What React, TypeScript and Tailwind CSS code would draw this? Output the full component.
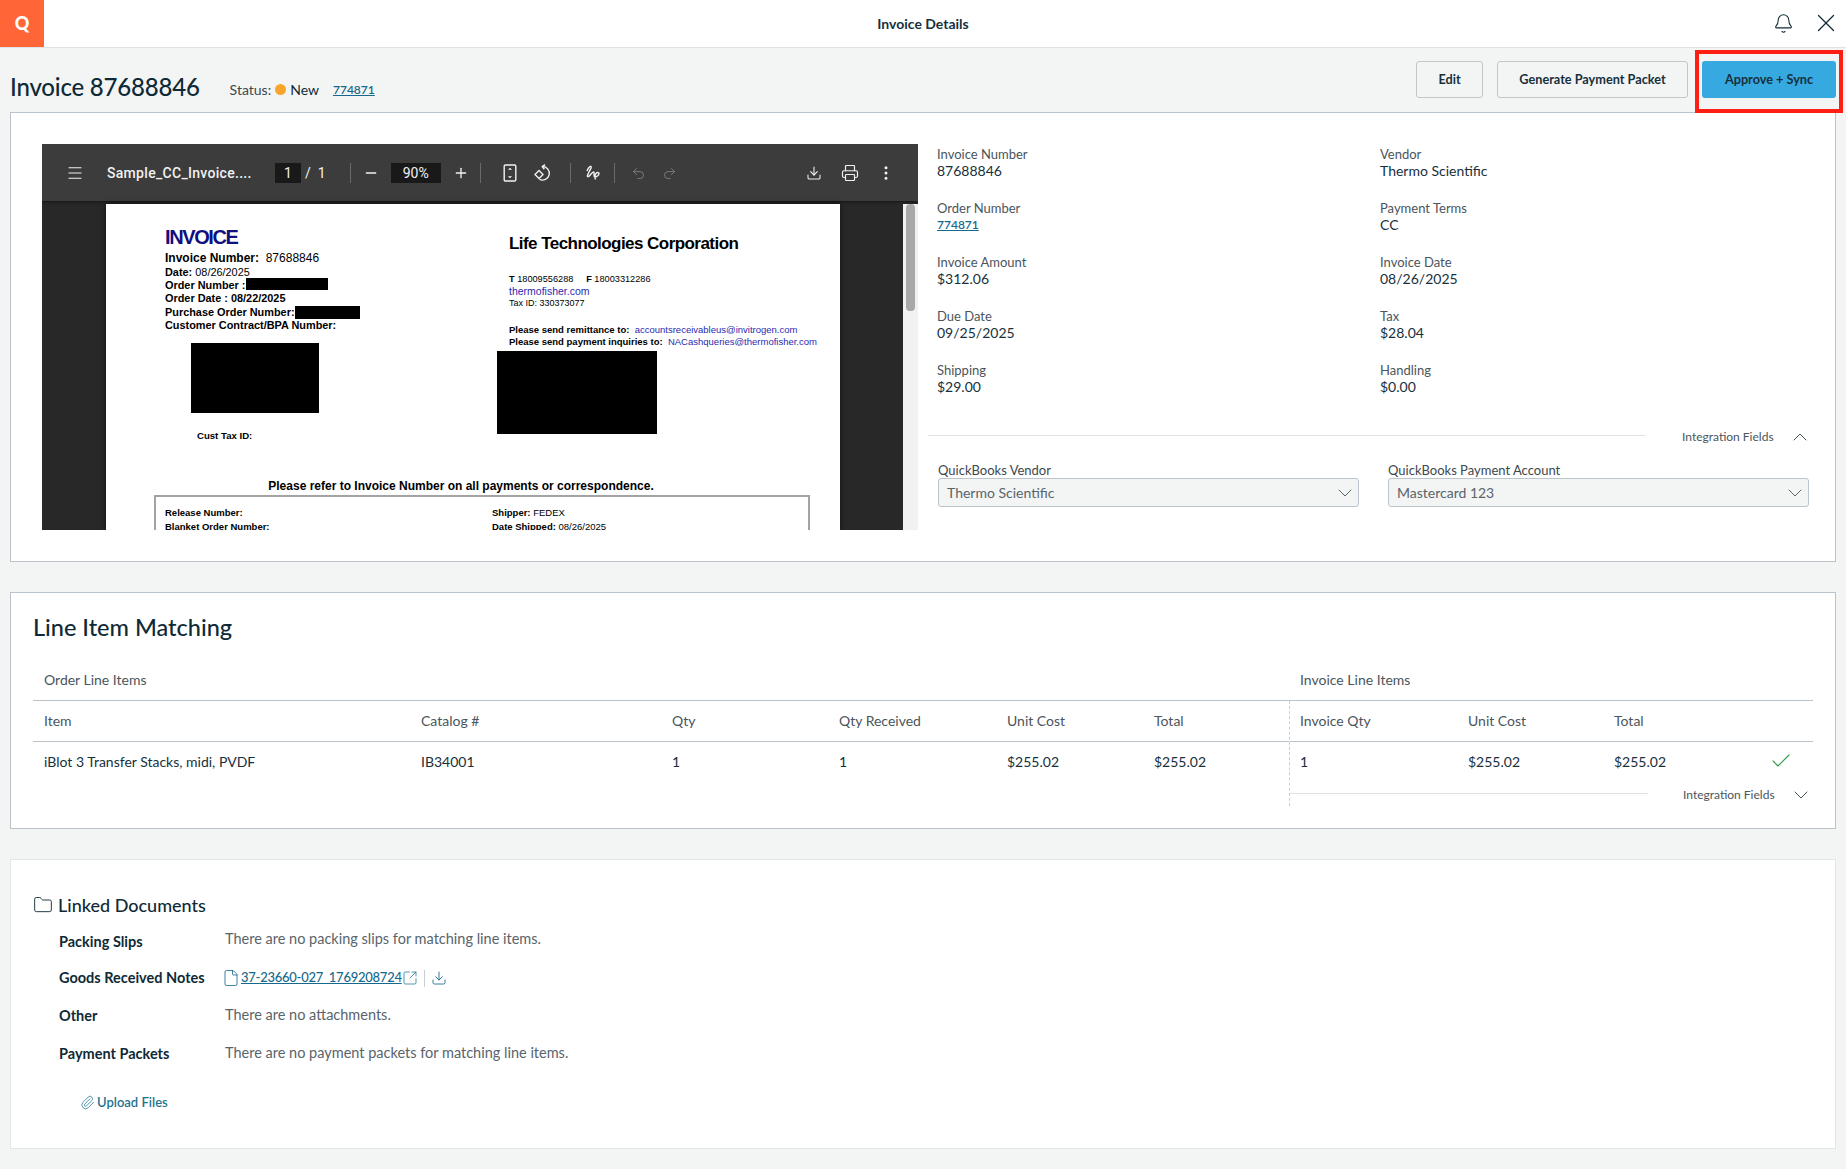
import React from 'react'
import { Bell, X, Menu, Minus, Plus, Download, Printer, EllipsisVertical, Undo2, Redo2, ChevronUp, ChevronDown, Check, Folder, File, SquareArrowOutUpRight, Paperclip } from 'lucide-react'

const fields = [
  ['Invoice Number', '87688846', 'Vendor', 'Thermo Scientific'],
  ['Order Number', '774871', 'Payment Terms', 'CC'],
  ['Invoice Amount', '$312.06', 'Invoice Date', '08/26/2025'],
  ['Due Date', '09/25/2025', 'Tax', '$28.04'],
  ['Shipping', '$29.00', 'Handling', '$0.00'],
]

const Field = ({ label, value }: { label: string; value: string }) => (
  <div className="h-[54px]">
    <div className="text-[13px] leading-[16px] text-[#4a555c]">{label}</div>
    {value === '774871' ? (
      <a className="block text-[12px] leading-[17px] font-semibold text-[#16698c] underline">{value}</a>
    ) : (
      <div className="text-[14px] leading-[18px] text-[#17303c]">{value}</div>
    )}
  </div>
)

const Select = ({ label, value }: { label: string; value: string }) => (
  <div className="w-[421px]">
    <div className="text-[13px] leading-[16px] text-[#3c474e]">{label}</div>
    <div className="flex h-[29px] items-center justify-between rounded-[3px] border border-[#bcc5cb] bg-[#f3f5f5] pl-[8px] pr-[1px] text-[14px] text-[#59646b]">
      {value}
      <ChevronDown className="h-[24px] w-[24px] text-[#59646b]" strokeWidth={1} />
    </div>
  </div>
)

const ToolDivider = () => <div className="h-[20px] w-px bg-[#6a6a6a]" />

const Redact = ({ className }: { className: string }) => <span className={`inline-block bg-black ${className}`} />

const PdfPage = () => (
  <div className="h-[326px] w-[734px] overflow-hidden bg-white font-['Liberation_Sans',Arial,sans-serif] text-black shadow-[0_0_6px_rgba(0,0,0,0.6)]">
    <div className="flex">
      <div className="w-[391px] pl-[59px] pt-[22px]">
        <div className="text-[20px] leading-[22px] font-bold tracking-[-1.4px] text-[#10107f]">INVOICE</div>
        <div className="mt-[3px] text-[12px] leading-[15px]"><b>Invoice Number:</b>&nbsp; 87688846</div>
        <div className="text-[10.9px] leading-[13.2px] font-bold">
          <div>Date: <span className="font-normal">08/26/2025</span></div>
          <div className="flex items-start">Order Number :<Redact className="ml-[1px] h-[12px] w-[82px] -translate-y-[1px]" /></div>
          <div>Order Date : 08/22/2025</div>
          <div className="flex items-start">Purchase Order Number:<Redact className="h-[13px] w-[65px]" /></div>
          <div>Customer Contract/BPA Number:</div>
        </div>
        <div className="ml-[26px] mt-[11px] h-[70px] w-[128px] bg-black" />
        <div className="ml-[32px] mt-[17px] text-[9.6px] leading-[11px] font-bold">Cust Tax ID:</div>
      </div>
      <div className="w-[343px] pl-[12px] pt-[31px]">
        <div className="text-[17px] leading-[18px] font-bold tracking-[-0.55px]">Life Technologies Corporation</div>
        <div className="mt-[20px] text-[9.2px] leading-[12px]"><b>T</b> 18009556288 &nbsp;&nbsp;&nbsp; <b>F</b> 18003312286</div>
        <div className="text-[10.5px] leading-[12px] text-[#2a2ab0]">thermofisher.com</div>
        <div className="text-[9px] leading-[12px]">Tax ID: 330373077</div>
        <div className="mt-[15px] whitespace-nowrap text-[9.5px] leading-[12px]"><b>Please send remittance to:</b>&nbsp; <span className="text-[#2a2ab0]">accountsreceivableus@invitrogen.com</span></div>
        <div className="whitespace-nowrap text-[9.5px] leading-[12px]"><b>Please send payment inquiries to:</b>&nbsp; <span className="text-[#2a2ab0]">NACashqueries@thermofisher.com</span></div>
        <div className="-ml-[12px] mt-[3px] h-[83px] w-[160px] bg-black" />
      </div>
    </div>
    <div className="mr-[24px] mt-[38px] text-center text-[12px] leading-[14px] font-bold">Please refer to Invoice Number on all payments or correspondence.</div>
    <div className="ml-[48px] mt-[2px] w-[656px] border-2 border-b-0 border-[#a3a3a3] px-[9px] pt-[9px] text-[9.5px] leading-[14px] font-bold">
      <div className="flex"><div className="w-[327px]">Release Number:</div><div>Shipper: <span className="font-normal">FEDEX</span></div></div>
      <div className="flex"><div className="w-[327px]">Blanket Order Number:</div><div>Date Shipped: <span className="font-normal">08/26/2025</span></div></div>
    </div>
  </div>
)

const PdfViewer = () => (
  <div className="h-[386px] w-[876px] shrink-0 overflow-hidden bg-[#282828] font-[Roboto,sans-serif]">
    <div className="flex h-[57px] items-center bg-[#3c3c3c] pt-[1px] text-[#f1f1f1] shadow-[0_1px_3px_rgba(0,0,0,0.5)]">
      <Menu className="ml-[24px] h-[18px] w-[18px]" strokeWidth={1.5} />
      <div className="ml-[23px] w-[168px] text-[14px] font-medium tracking-[0.3px]">Sample_CC_Invoice....</div>
      <div className="flex h-[20px] w-[26px] items-center justify-center bg-[#191919] text-[14px]">1</div>
      <span className="ml-[4px] text-[14px]">/</span>
      <span className="ml-[7px] text-[14px]">1</span>
      <div className="ml-[24px]"><ToolDivider /></div>
      <Minus className="ml-[12px] h-[16px] w-[16px]" strokeWidth={2} />
      <div className="ml-[12px] flex h-[20px] w-[50px] items-center justify-center bg-[#191919] text-[14px]">90%</div>
      <Plus className="ml-[12px] h-[16px] w-[16px]" strokeWidth={2} />
      <div className="ml-[11px]"><ToolDivider /></div>
      <svg className="ml-[22px] h-[18px] w-[14px]" viewBox="0 0 14 18" fill="none" stroke="currentColor" strokeWidth="1.4">
        <rect x="1.2" y="1" width="11.6" height="16" rx="1.2" />
        <path d="M7 4.500v1.500M5.600 6 7 4.200 8.400 6M7 13.500V12M5.600 12 7 13.800 8.400 12" strokeWidth="1" />
      </svg>
      <svg className="ml-[16px] h-[18px] w-[18px]" viewBox="0 0 18 18" fill="none" stroke="currentColor" strokeWidth="1.4">
        <path d="M9.500 2.500a6.800 6.800 0 1 1-3 12.900" />
        <path d="M12 .6 9.300 2.600l2 2.600" />
        <path d="M6 6.500 2 10.500l4 4 4-4z" />
      </svg>
      <div className="ml-[19px]"><ToolDivider /></div>
      <svg className="ml-[14px] h-[18px] w-[16px]" viewBox="0 0 16 18" fill="none" stroke="currentColor" strokeWidth="1.4">
        <path d="M2 7c1-3 3-5 4-4.500S5 6 3.500 9 2 13 3.500 12.500 7 8 8.500 8 8 13 10 13s4-2 4-3.500-2-1-3 0-1.500 4-.5 6" />
      </svg>
      <div className="ml-[13px]"><ToolDivider /></div>
      <Undo2 className="ml-[16px] h-[15px] w-[15px] text-[#7d7d7d]" strokeWidth={1.5} />
      <Redo2 className="ml-[16px] h-[15px] w-[15px] text-[#7d7d7d]" strokeWidth={1.5} />
      <Download className="ml-[129px] h-[16px] w-[16px]" strokeWidth={1.6} />
      <Printer className="ml-[19px] h-[18px] w-[18px]" strokeWidth={1.6} />
      <EllipsisVertical className="ml-[18px] h-[18px] w-[18px]" strokeWidth={2} />
    </div>
    <div className="flex h-[329px] items-start pt-[3px]">
      <div className="ml-[64px]"><PdfPage /></div>
      <div className="ml-[63px] h-[326px] w-[15px] bg-[#f1f1f1] px-[3px]">
        <div className="h-[107px] rounded-[4px] bg-[#a8a8a8]" />
      </div>
    </div>
  </div>
)

const App = () => (
  <div className="relative min-h-[1169px] bg-[#f3f5f5] font-[Lato,sans-serif] text-[#0f2a36]">
    {/* Top bar */}
    <div className="relative flex h-[48px] items-center justify-center border-b border-[#dfe3e5] bg-white">
      <div className="absolute left-0 top-0 flex h-[47px] w-[44px] items-center justify-center bg-[#ff6536] text-[18px] font-black text-white">Q</div>
      <div className="text-[14px] font-bold text-[#17303c]">Invoice Details</div>
      <div className="absolute right-[5px] top-[8px] flex items-center gap-[17px]">
        <Bell className="h-[21px] w-[21px]" strokeWidth={1.2} />
        <X className="h-[30px] w-[30px]" strokeWidth={1} />
      </div>
    </div>

    <div className="px-[10px]">
      {/* Title row */}
      <div className="flex h-[64px] items-start justify-between">
        <div className="flex items-baseline pt-[24px]">
          <h1 className="text-[24px] leading-[30px] font-medium tracking-[-0.2px]">Invoice 87688846</h1>
          <div className="ml-[30px] flex -translate-y-[1px] items-center text-[14px]">
            <span className="text-[#3c474e]">Status:</span>
            <span className="mx-[4px] h-[11px] w-[11px] rounded-full bg-[#f9a52c]" />
            New
            <a className="ml-[14px] text-[12px] font-semibold text-[#16698c] underline">774871</a>
          </div>
        </div>
        <div className="flex gap-[14px] pt-[13px] text-[12.7px] font-bold text-[#17303c]">
          <button className="h-[37px] w-[67px] rounded-[3px] border border-[#c0c8cc] bg-[#f3f5f5] pt-[1px]">Edit</button>
          <button className="h-[37px] w-[191px] rounded-[3px] border border-[#c0c8cc] bg-[#f3f5f5] pt-[1px]">Generate Payment Packet</button>
          <button className="h-[37px] w-[134px] rounded-[3px] bg-[#36a9e1] pt-[1px]">Approve + Sync</button>
        </div>
      </div>

      {/* Invoice card */}
      <div className="flex h-[450px] border border-[#bac3ca] bg-white pl-[31px] pt-[31px]">
        <PdfViewer />
        <div className="ml-[10px] w-[889px] pt-[2px]">
          <div className="grid grid-cols-[443px_1fr] pl-[9px]">
            {fields.map((row) => (
              <React.Fragment key={row[0]}>
                <Field label={row[0]} value={row[1]} />
                <Field label={row[2]} value={row[3]} />
              </React.Fragment>
            ))}
          </div>
          <div className="mt-[13px] flex h-[16px] items-center">
            <div className="h-px w-[718px] -translate-y-[2px] bg-[#dfe3e5]" />
            <span className="ml-[36px] whitespace-nowrap text-[12px] text-[#4a555c]">Integration Fields</span>
            <ChevronUp className="ml-[14px] h-[24px] w-[24px] shrink-0 text-[#4a555c]" strokeWidth={1} />
          </div>
          <div className="ml-[10px] mt-[17px] flex gap-[29px]">
            <Select label="QuickBooks Vendor" value="Thermo Scientific" />
            <Select label="QuickBooks Payment Account" value="Mastercard 123" />
          </div>
        </div>
      </div>

      {/* Line items */}
      <div className="mt-[30px] h-[237px] border border-[#bac3ca] bg-white px-[22px]">
        <h2 className="pt-[19px] text-[23.500px] leading-[30px] font-medium">Line Item Matching</h2>
        <div className="mt-[27px] flex h-[32px] border-b border-[#bac3ca] pt-[2px] text-[14px] leading-[18px] text-[#4a555c]">
          <div className="w-[1256px] pl-[11px]">Order Line Items</div>
          <div className="pl-[11px]">Invoice Line Items</div>
        </div>
        <div className="flex text-[14px]">
          <div className="w-[1256px] shrink-0">
            <div className="grid h-[41px] grid-cols-[377px_251px_167px_168px_147px_1fr] items-center border-b border-[#bac3ca] pb-[2px] pl-[11px] text-[#4a555c]">
              <span>Item</span><span>Catalog #</span><span>Qty</span><span>Qty Received</span><span>Unit Cost</span><span>Total</span>
            </div>
            <div className="grid h-[40px] grid-cols-[377px_251px_167px_168px_147px_1fr] items-center pb-[2px] pl-[11px] text-[#17303c]">
              <span>iBlot 3 Transfer Stacks, midi, PVDF</span><span>IB34001</span><span>1</span><span>1</span><span>$255.02</span><span>$255.02</span>
            </div>
          </div>
          <div className="h-[105px] flex-1 border-l border-dashed border-[#c8cfd4]">
            <div className="grid h-[41px] grid-cols-[168px_146px_1fr] items-center border-b border-[#bac3ca] pb-[2px] pl-[10px] text-[#4a555c]">
              <span>Invoice Qty</span><span>Unit Cost</span><span>Total</span>
            </div>
            <div className="relative grid h-[40px] grid-cols-[168px_146px_1fr] items-center pb-[2px] pl-[10px] text-[#17303c]">
              <span>1</span><span>$255.02</span><span>$255.02</span>
              <Check className="absolute right-[20px] top-[7px] h-[24px] w-[24px] text-[#2e9b46]" strokeWidth={1.1} />
            </div>
            <div className="mt-[5px] flex h-[16px] items-center">
              <div className="h-px w-[358px] shrink-0 -translate-y-[2px] bg-[#dfe3e5]" />
              <span className="ml-[35px] whitespace-nowrap text-[12px] text-[#4a555c]">Integration Fields</span>
              <ChevronDown className="ml-[14px] h-[24px] w-[24px] shrink-0 text-[#4a555c]" strokeWidth={1} />
            </div>
          </div>
        </div>
      </div>

      {/* Linked documents */}
      <div className="mt-[30px] h-[290px] border border-[#e2e6e8] bg-white pl-[22px] pt-[33px]">
        <div className="flex h-[24px] items-center">
          <Folder className="h-[20px] w-[20px]" strokeWidth={1.1} />
          <span className="ml-[5px] text-[18px] font-medium">Linked Documents</span>
        </div>
        <div className="ml-[26px] mt-[11px] w-[600px] text-[14.500px]">
          <div className="flex h-[39px]">
            <div className="w-[166px] pt-[3px] font-bold">Packing Slips</div>
            <div className="text-[#59646b]">There are no packing slips for matching line items.</div>
          </div>
          <div className="flex h-[37px]">
            <div className="w-[166px] font-bold">Goods Received Notes</div>
            <div className="flex h-[22px] items-center text-[#16698c]">
              <File className="-ml-[3px] h-[18px] w-[18px]" strokeWidth={1.1} />
              <a className="ml-[1px] flex items-center text-[13px] font-medium tracking-[-0.25px] underline">
                37-23660-027_1769208724
                <SquareArrowOutUpRight className="h-[16px] w-[16px]" strokeWidth={1.1} />
              </a>
              <span className="ml-[6px] h-[17px] w-px bg-[#c8cfd4]" />
              <Download className="ml-[6px] h-[16px] w-[16px]" strokeWidth={1.3} />
            </div>
          </div>
          <div className="flex h-[38px]">
            <div className="w-[166px] pt-[1px] font-bold">Other</div>
            <div className="text-[#59646b]">There are no attachments.</div>
          </div>
          <div className="flex h-[37px]">
            <div className="w-[166px] pt-[1px] font-bold">Payment Packets</div>
            <div className="text-[#59646b]">There are no payment packets for matching line items.</div>
          </div>
        </div>
        <div className="ml-[47px] mt-[14px] flex items-center text-[13px] font-semibold text-[#1f7391]">
          <Paperclip className="mr-[2px] h-[15px] w-[15px]" strokeWidth={1.2} />
          Upload Files
        </div>
      </div>
    </div>

    {/* Highlight around the primary action */}
    <div className="absolute left-[1695px] top-[50px] h-[63px] w-[148px] border-4 border-[#ff1e14]" />
  </div>
)

export default App
